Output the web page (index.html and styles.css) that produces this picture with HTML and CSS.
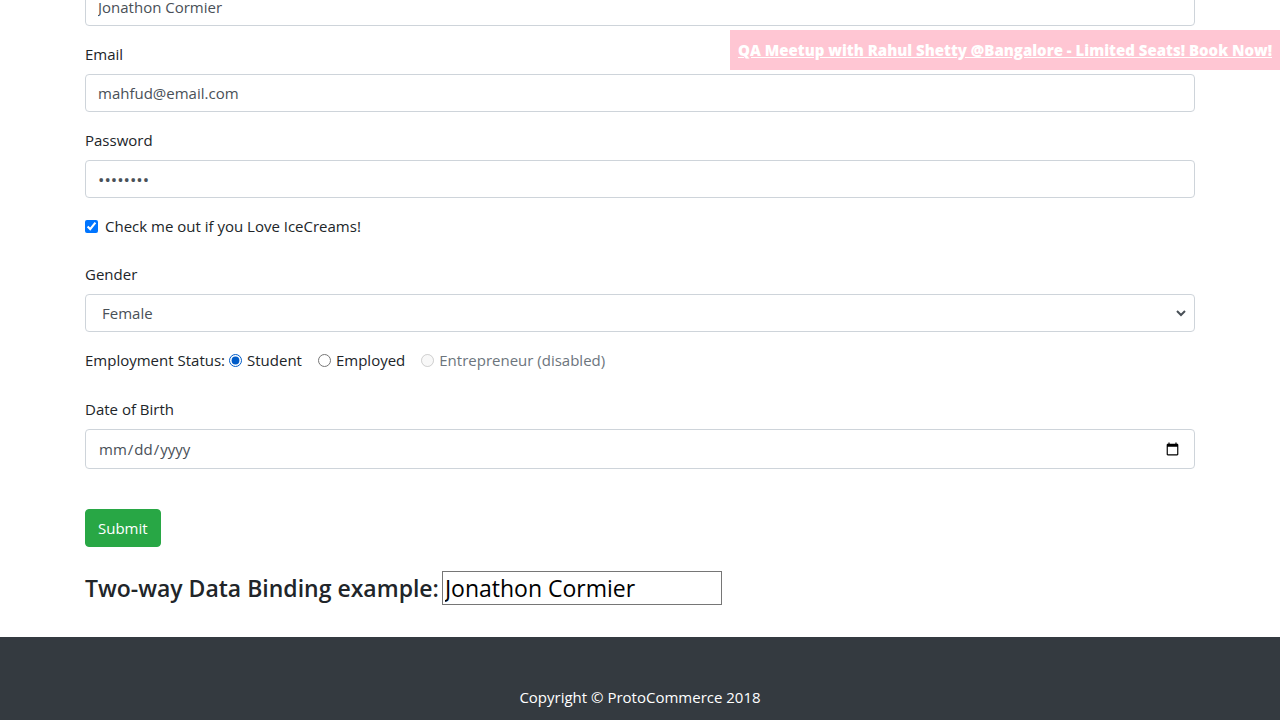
FILE: index.html
```html
<!DOCTYPE html>
<html lang="en">
<head>
<meta charset="utf-8">
<meta name="viewport" content="width=device-width, initial-scale=1">
<title>ProtoCommerce</title>
<link rel="stylesheet" href="styles.css">
</head>
<body>
<a class="promo" href="#">QA Meetup with Rahul Shetty @Bangalore - Limited Seats! Book Now!</a>
<main class="container">
<form class="form">
<div class="form-group first"><input class="form-control" type="text" aria-label="Name" value="Jonathon Cormier"></div>
<div class="form-group"><label for="email">Email</label><input class="form-control" id="email" type="text" value="mahfud@email.com"></div>
<div class="form-group"><label for="password">Password</label><input class="form-control password" id="password" type="password" value="password"></div>
<div class="form-check"><input id="ice" type="checkbox" checked><label for="ice">Check me out if you Love IceCreams!</label></div>
<div class="form-group"><label for="gender">Gender</label><select class="form-control gender" id="gender"><option>Male</option><option selected>Female</option></select></div>
<div class="status" role="radiogroup" aria-labelledby="status">
<span class="status-title" id="status">Employment Status:</span>
<span class="choice"><input id="student" name="status" type="radio" checked><label for="student">Student</label></span>
<span class="choice"><input id="employed" name="status" type="radio"><label for="employed">Employed</label></span>
<span class="choice disabled"><input id="entrepreneur" name="status" type="radio" disabled><label for="entrepreneur">Entrepreneur (disabled)</label></span>
</div>
<div class="form-group"><label for="birth">Date of Birth</label><input class="form-control birth" id="birth" type="date"></div>
<button class="submit" type="button">Submit</button>
</form>
<h4 class="binding"><label for="binding">Two-way Data Binding example:</label><input id="binding" type="text" value="Jonathon Cormier"></h4>
</main>
<footer class="footer"><p>Copyright © ProtoCommerce 2018</p></footer>
</body>
</html>
```
FILE: styles.css
```css
*, *::before, *::after { box-sizing: border-box; }
body {
  display: flex;
  flex-direction: column;
  min-height: 100vh;
  margin: 0;
  font-family: "Segoe UI", "Selawik", "Open Sans", "Noto Sans", sans-serif;
  font-size: 15px;
  line-height: 24px;
  color: #212529;
  background: #fff;
  overflow-x: hidden;
}
input, select, button { margin: 0; font: inherit; }
.container { display: flow-root; width: 100%; max-width: 1140px; margin: -12px auto 0; padding: 0 15px; }
.promo {
  position: fixed;
  top: 30px;
  right: 0;
  padding: 8px;
  background: #ffc6d3;
  color: #fff;
  font-weight: 770;
  white-space: nowrap;
}
.form-group { margin-bottom: 16px; }
.form-group label { display: block; margin-bottom: 8px; }
.form-control {
  display: block;
  width: 100%;
  height: 38px;
  padding: 6px 12px;
  line-height: 24px;
  color: #495057;
  background: #fff;
  border: 1px solid #ced4da;
  border-radius: 4px;
}
.form-control.password { font-size: 17px; }
.gender {
  padding: 6px 16px;
  appearance: none;
  background: #fff url("data:image/svg+xml,%3Csvg xmlns='http://www.w3.org/2000/svg' width='10' height='8' viewBox='0 0 10 8'%3E%3Cpath d='M1 2l4 4 4-4' fill='none' stroke='%23495057' stroke-width='2'/%3E%3C/svg%3E") no-repeat right 8px center;
}
.form-control.birth { height: 40px; }
.form-check { display: flex; align-items: center; gap: 7px; margin-bottom: 24px; }
.form-check input, .choice input { width: 13px; height: 13px; }
.status { display: flex; align-items: center; gap: 16px; margin-bottom: 25px; }
.status-title { margin-right: -12px; }
.choice { display: flex; align-items: center; gap: 5px; }
#student { accent-color: #005cc8; }
.disabled { color: #6c757d; }
.submit {
  display: block;
  margin-top: 40px;
  height: 38px;
  padding: 6px 12px;
  color: #fff;
  background: #28a745;
  border: 1px solid #28a745;
  border-radius: 4px;
}
.binding { display: flex; align-items: center; gap: 3px; margin: 24px 0 32px; font-size: 23px; line-height: 29px; font-weight: 600; }
.binding input { width: 280px; height: 34px; padding: 1px 2px; font-weight: 400; color: #000; border: 1px solid #767676; }
.footer { flex: 1; padding: 48px 15px 8px; background: #343a40; color: #fff; text-align: center; }
.footer p { margin: 0; }
```
